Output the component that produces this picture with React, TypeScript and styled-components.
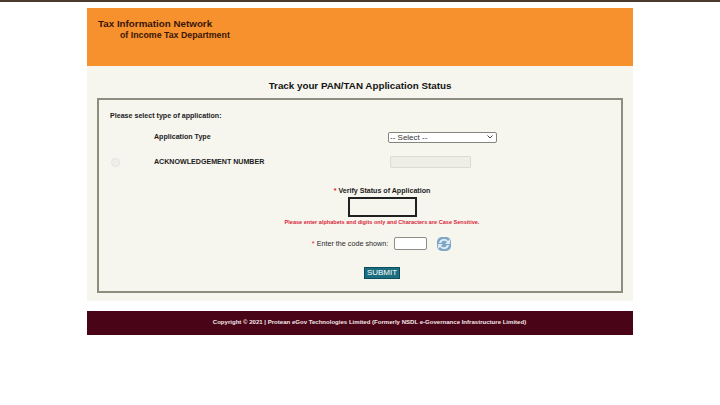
import React from 'react';
import styled, { createGlobalStyle } from 'styled-components';

const GlobalStyle = createGlobalStyle`
  html, body {
    margin: 0;
    padding: 0;
    background: #fff;
    font-family: 'Liberation Sans', Arial, sans-serif;
  }
`;

const TopLine = styled.div`
  height: 2px;
  background: #4a3a2c;
`;

const Page = styled.div`
  width: 546px;
  margin: 6px auto 0;
`;

const Header = styled.div`
  height: 58px;
  box-sizing: border-box;
  padding: 10px 0 0 11px;
  background: #f6912e;
  color: #3a1608;
  font-weight: bold;
`;

const HeaderTitle = styled.div`
  font-size: 9.8px;
  line-height: 12px;
`;

const HeaderSub = styled.div`
  font-size: 8.8px;
  line-height: 11px;
  padding-left: 22px;
`;

const Main = styled.div`
  height: 235px;
  box-sizing: border-box;
  padding: 13px 10px 0;
  background: #f6f5ee;
`;

const Title = styled.h1`
  margin: 0 0 6px;
  font-size: 9.8px;
  line-height: 13px;
  text-align: center;
  color: #141414;
`;

const Box = styled.div`
  height: 195px;
  box-sizing: border-box;
  padding: 12px 11px 0;
  border: 2px solid #8c8e80;
`;

const Prompt = styled.div`
  font-size: 7.1px;
  line-height: 9px;
  font-weight: bold;
  color: #1c1c1c;
`;

const Row = styled.div<{ $top: number }>`
  display: grid;
  grid-template-columns: 44px 234px 1fr;
  align-items: center;
  height: 12px;
  margin-top: ${(p) => p.$top}px;
`;

const RowLabel = styled.div`
  grid-column: 2;
  font-size: 7.1px;
  font-weight: bold;
  color: #1c1c1c;
  white-space: nowrap;
`;

const Radio = styled.span`
  width: 7px;
  height: 7px;
  margin-left: 1px;
  border: 1px solid #e2e3dc;
  border-radius: 50%;
  background: #f0f0ea;
`;

const SelectBox = styled.select`
  appearance: none;
  width: 109px;
  height: 11px;
  box-sizing: border-box;
  padding: 0 0 0 1px;
  border: 1px solid #85857f;
  border-radius: 2px;
  background: #fff url("data:image/svg+xml,%3Csvg xmlns='http://www.w3.org/2000/svg' width='6' height='4'%3E%3Cpath d='M.5.5 3 3 5.5.5' fill='none' stroke='%23444' stroke-width='1'/%3E%3C/svg%3E") no-repeat right 3px center;
  font: 8px 'Liberation Sans', Arial, sans-serif;
  color: #333;
`;

const DisabledInput = styled.div`
  width: 81px;
  height: 12px;
  box-sizing: border-box;
  margin-left: 2px;
  border: 1px solid #dcdcd4;
  border-radius: 1px;
  background: #eeede6;
`;

const Centered = styled.div`
  display: flex;
  flex-direction: column;
  align-items: center;
  padding-left: 44px;
`;

const VerifyHeading = styled.div`
  margin-top: 19px;
  font-size: 7.1px;
  line-height: 9px;
  font-weight: bold;
  color: #1c1c1c;
`;

const Star = styled.span`
  color: #d6202a;
`;

const Captcha = styled.div`
  width: 69px;
  height: 20px;
  box-sizing: border-box;
  margin-top: 1px;
  border: 2px solid #202020;
`;

const Hint = styled.div`
  margin-top: 2px;
  font-size: 5.55px;
  line-height: 7px;
  font-weight: bold;
  color: #d8283a;
  white-space: nowrap;
`;

const CodeRow = styled.div`
  display: flex;
  align-items: center;
  height: 16px;
  margin-top: 9px;
`;

const CodeLabel = styled.div`
  font-size: 7.2px;
  color: #2a2a2a;
  white-space: nowrap;
`;

const CodeInput = styled.div`
  width: 33px;
  height: 13px;
  box-sizing: border-box;
  margin-left: 6px;
  border: 1px solid #8e8e88;
  border-radius: 2px;
  background: #fff;
`;

const RefreshIcon = styled.svg`
  display: block;
  width: 16px;
  height: 16px;
  margin: 2px 0 0 9px;
`;

const SubmitButton = styled.button`
  width: 36px;
  height: 12px;
  margin-top: 16px;
  padding: 0;
  border: 1px solid #0d4c5c;
  background: #1a6e80;
  color: #fff;
  font: 8px/10px 'Liberation Sans', Arial, sans-serif;
`;

const Footer = styled.div`
  height: 24px;
  box-sizing: border-box;
  margin-top: 10px;
  padding-left: 19px;
  background: #4a0418;
  color: #f2e6e6;
  font-size: 6.05px;
  line-height: 22px;
  font-weight: bold;
  text-align: center;
`;

const App: React.FC = () => {
  return (
    <>
      <GlobalStyle />
      <TopLine />
      <Page>
        <Header>
          <HeaderTitle>Tax Information Network</HeaderTitle>
          <HeaderSub>of Income Tax Department</HeaderSub>
        </Header>
        <Main>
          <Title>Track your PAN/TAN Application Status</Title>
          <Box>
            <Prompt>Please select type of application:</Prompt>
            <Row $top={10}>
              <RowLabel>Application Type</RowLabel>
              <SelectBox defaultValue="">
                <option value="">-- Select --</option>
              </SelectBox>
            </Row>
            <Row $top={13}>
              <Radio />
              <RowLabel>ACKNOWLEDGEMENT NUMBER</RowLabel>
              <DisabledInput />
            </Row>
            <Centered>
              <VerifyHeading>
                <Star>*</Star> Verify Status of Application
              </VerifyHeading>
              <Captcha />
              <Hint>Please enter alphabets and digits only and Characters are Case Sensitive.</Hint>
              <CodeRow>
                <CodeLabel>
                  <Star>*</Star> Enter the code shown:
                </CodeLabel>
                <CodeInput />
                <RefreshIcon viewBox="0 0 16 16">
                  <rect x="1" y="1" width="14" height="14" rx="5" fill="#7ba6c6" />
                  <path d="M3 7 A5 5 0 0 1 12 5 L14 3 V8 H9 L11 6 A3.5 3.5 0 0 0 5 7 Z" fill="#dfeaf2" />
                  <path d="M13 9 A5 5 0 0 1 4 11 L2 13 V8 H7 L5 10 A3.5 3.5 0 0 0 11 9 Z" fill="#dfeaf2" />
                </RefreshIcon>
              </CodeRow>
              <SubmitButton type="button">SUBMIT</SubmitButton>
            </Centered>
          </Box>
        </Main>
        <Footer>Copyright © 2021 | Protean eGov Technologies Limited (Formerly NSDL e-Governance Infrastructure Limited)</Footer>
      </Page>
    </>
  );
};

export default App;
